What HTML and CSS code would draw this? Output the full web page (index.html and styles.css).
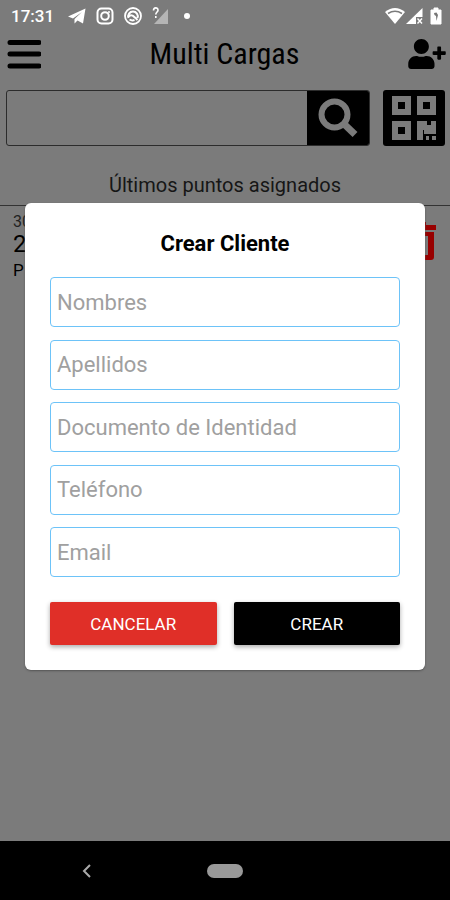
FILE: index.html
```html
<!DOCTYPE html>
<html lang="es">
<head>
<meta charset="utf-8">
<meta name="viewport" content="width=device-width, initial-scale=1">
<title>Multi Cargas</title>
<link rel="stylesheet" href="styles.css">
</head>
<body>
<div class="screen">
  <div class="status">
    <span class="clock">17:31</span>
    <svg class="st st-plane" viewBox="0 0 18 16"><path d="M0 8.500 17.500.5 15 15.500 9.500 12.500 6.500 15.500V11L14 4 5 10.500Z" fill="#fff"/></svg>
    <svg class="st" viewBox="0 0 18 18" fill="none" stroke="#fff"><rect x="1.500" y="1.500" width="15" height="15" rx="4" stroke-width="2"/><circle cx="9" cy="9" r="3.800" stroke-width="2"/><circle cx="13" cy="5" r="1" fill="#fff" stroke="none"/></svg>
    <svg class="st" viewBox="0 0 18 18" fill="none" stroke="#fff"><circle cx="9" cy="9" r="8" stroke-width="1.800"/><path d="M4.500 11A4.800 4.800 0 1 1 13.500 11M5 9.500C7 6.500 9.500 9 13.500 13M5.500 12.500Q8 14 10.500 13" stroke-width="2"/></svg>
    <svg class="st" viewBox="0 0 18 18"><path d="M16 2V17H2Z" fill="#b5b5b5"/><path d="M1.500 3.500C1.500 0 6 0 6 3.200 6 5 3.800 5 3.800 7.500M3.800 9V11" fill="none" stroke="#fff" stroke-width="1.600"/></svg>
    <span class="dot"></span>
    <span class="grow"></span>
    <svg class="st st-wifi" viewBox="0 0 20 18"><path d="M0 5Q10-3 20 5L10 17Z" fill="#fff"/><path d="M3 6.500Q10 2 17 6.500" fill="none" stroke="#7b7b7b" stroke-width="1.500"/></svg>
    <svg class="st st-signal" viewBox="0 0 18 18"><path d="M0 17 16.500 1V17Z" fill="#fff"/><path d="M10 10H17V17H10Z" fill="#7b7b7b"/><path d="M11.500 11.500 16 16.500M16 11.500 11.500 16.500" stroke="#fff" stroke-width="1.400"/></svg>
    <svg class="st st-battery" viewBox="0 0 12 18"><path d="M1 3H4V1H8V3H11V17H1Z" fill="#fff" stroke="#fff" stroke-linejoin="round"/><path d="M4 6 6.500 5.500 8 8 6.500 14 6 9 4.500 8Z" fill="#777"/></svg>
  </div>

  <header class="bar">
    <button class="icon-btn" aria-label="Menú"><svg width="34" height="30" viewBox="0 0 34 30"><path d="M3 3.500H32M3 15H32M3 27H32" stroke="#000" stroke-width="5" stroke-linecap="round"/></svg></button>
    <h1>Multi Cargas</h1>
    <button class="icon-btn" aria-label="Agregar cliente"><svg width="38" height="30" viewBox="0 0 640 512"><path d="M624 208h-64v-64c0-8.800-7.200-16-16-16h-32c-8.800 0-16 7.200-16 16v64h-64c-8.800 0-16 7.200-16 16v32c0 8.800 7.200 16 16 16h64v64c0 8.800 7.200 16 16 16h32c8.800 0 16-7.200 16-16v-64h64c8.800 0 16-7.200 16-16v-32c0-8.800-7.200-16-16-16zm-400 48c70.700 0 128-57.300 128-128S294.700 0 224 0 96 57.300 96 128s57.300 128 128 128zm89.600 32h-16.700c-22.200 10.200-46.900 16-72.900 16s-50.600-5.800-72.900-16h-16.700C60.200 288 0 348.200 0 422.400V464c0 26.500 21.500 48 48 48h352c26.500 0 48-21.500 48-48v-41.600c0-74.200-60.200-134.400-134.400-134.400z"/></svg></button>
  </header>

  <form class="search">
    <div class="search-box">
      <input type="search" aria-label="Buscar cliente">
      <button type="button" class="dark-btn search-btn" aria-label="Buscar"><svg width="40" height="40" viewBox="0 0 40 40" fill="none" stroke="#7b7b7b"><circle cx="16.500" cy="16.500" r="13" stroke-width="6"/><path d="M25 25 37 36.500" stroke-width="7"/></svg></button>
    </div>
    <button type="button" class="dark-btn qr-btn" aria-label="Escanear código QR"><svg width="46" height="46" viewBox="0 0 46 46"><path fill="#7b7b7b" fill-rule="evenodd" d="M1 1H20V20H1ZM7 7V14H14V7ZM26 1H45V20H26ZM32 7V14H39V7ZM1 26H20V45H1ZM7 32V39H14V32ZM26 26H36V30H40V26H45V39H33V35H32V45H26ZM35 41H38V45H35ZM41 41H45V45H41Z"/></svg></button>
  </form>

  <h2>Últimos puntos asignados</h2>
  <ul class="list">
    <li>
      <div class="entry"><span class="date">30</span><span class="points">2</span><span class="name">P</span></div>
      <button class="icon-btn" aria-label="Eliminar"><svg width="32" height="38" viewBox="0 0 32 38"><path fill="#980000" fill-rule="evenodd" d="M0 3H10V0H22V3H32V8H0ZM2 10H30V35Q30 38 27 38H5Q2 38 2 35ZM7 14V33H10V14ZM14 14V33H18V14ZM21 14V33H24V14Z"/></svg></button>
    </li>
  </ul>

  <nav class="system-nav">
    <button class="icon-btn" aria-label="Atrás"><svg width="10" height="14" viewBox="0 0 10 14"><path d="M8 1 2 7 8 13" fill="none" stroke="#aaa" stroke-width="2"/></svg></button>
    <button class="home" aria-label="Inicio"></button>
    <span></span>
  </nav>

  <div class="overlay">
    <form class="dialog" role="dialog" aria-labelledby="dialog-title">
      <h3 id="dialog-title">Crear Cliente</h3>
      <div class="fields">
        <input type="text" placeholder="Nombres" aria-label="Nombres">
        <input type="text" placeholder="Apellidos" aria-label="Apellidos">
        <input type="text" placeholder="Documento de Identidad" aria-label="Documento de Identidad">
        <input type="tel" placeholder="Teléfono" aria-label="Teléfono">
        <input type="email" placeholder="Email" aria-label="Email">
      </div>
      <div class="actions">
        <button type="button" class="cancel">CANCELAR</button>
        <button type="button" class="create">CREAR</button>
      </div>
    </form>
  </div>
</div>
</body>
</html>
```
FILE: styles.css
```css
* { box-sizing: border-box; }
body { margin: 0; font-family: Roboto, "Liberation Sans", sans-serif; color: #000; background: #7b7b7b; }
button, input { font: inherit; }
h1, h2, h3, ul { margin: 0; padding: 0; font-weight: 400; }
svg { display: block; }

.screen { position: relative; min-height: 100vh; display: flex; flex-direction: column; }

.status { display: flex; align-items: center; height: 32px; padding: 0 8px 0 11px; }
.clock { color: #fff; font-size: 17px; font-weight: 500; margin-right: 14px; }
.st { width: 18px; height: 18px; margin-right: 10px; }
.st-wifi { width: 20px; margin-right: 1px; }
.st-signal { margin-right: 6px; }
.st-battery { width: 12px; margin-right: 0; }
.dot { width: 6px; height: 6px; margin-left: 4px; border-radius: 50%; background: #fff; }
.grow { flex: 1; }

.icon-btn { padding: 0; border: 0; background: none; }
.bar { display: flex; align-items: center; justify-content: space-between; height: 44px; padding: 0 4px 0 7px; }
.bar h1 { font-family: "Roboto Condensed", Roboto, sans-serif; font-size: 30px; line-height: 40px; }

.search { display: flex; gap: 13px; padding: 14px 5px 0 6px; }
.search-box { flex: 1; display: flex; height: 56px; border: 1px solid #2c2c2c; border-radius: 3px; overflow: hidden; }
.search-box input { flex: 1; min-width: 0; padding: 0 8px; border: 0; outline: 0; background: transparent; font-size: 22px; }
.dark-btn { display: flex; align-items: center; justify-content: center; padding: 0; border: 0; background: #000; }
.search-btn { width: 62px; }
.qr-btn { width: 62px; height: 56px; border-radius: 3px; }

h2 { margin-top: 27px; font-size: 20px; line-height: 24px; text-align: center; color: #161616; }
.list { flex: 1; margin-top: 8px; border-top: 1px solid #333; list-style: none; }
.list li { display: flex; align-items: flex-start; justify-content: space-between; padding: 6px 14px 6px 13px; }
.list .icon-btn { margin-top: 10px; }
.entry { display: flex; flex-direction: column; }
.date { font-size: 16px; line-height: 20px; color: #222; }
.points { font-size: 24px; line-height: 24px; }
.name { font-size: 17px; line-height: 28px; }

.system-nav { display: grid; grid-template-columns: 1fr 36px 1fr; align-items: center; justify-items: center; height: 59px; background: #000; }
.system-nav .icon-btn { padding-right: 34px; }
.home { width: 36px; height: 14px; padding: 0; border: 0; border-radius: 7px; background: #999; }

.overlay { position: absolute; inset: 32px 0 59px; display: flex; align-items: center; justify-content: center; padding: 0 25px; }
.dialog { flex: 1; padding: 25px; border-radius: 6px; background: #fff; box-shadow: 0 1px 2px #555; }
.dialog h3 { margin-bottom: 17px; font-size: 22px; font-weight: 700; line-height: 32px; text-align: center; }
.fields { display: flex; flex-direction: column; justify-content: space-between; height: 300px; }
.dialog input { width: 100%; height: 50px; padding: 0 6px; border: 1px solid #6dc3f8; border-radius: 4px; outline: 0; background: #fff; font-size: 22px; }
.dialog input::placeholder { color: #a0a0a0; opacity: 1; }
.actions { display: flex; gap: 17px; margin-top: 25px; }
.actions button { flex: 1; height: 43px; padding: 0; border: 0; border-radius: 2px; color: #fff; font-size: 17px; box-shadow: 0 2px 5px #0005; }
.actions .cancel { background: #e02f28; }
.actions .create { background: #000; }
```
